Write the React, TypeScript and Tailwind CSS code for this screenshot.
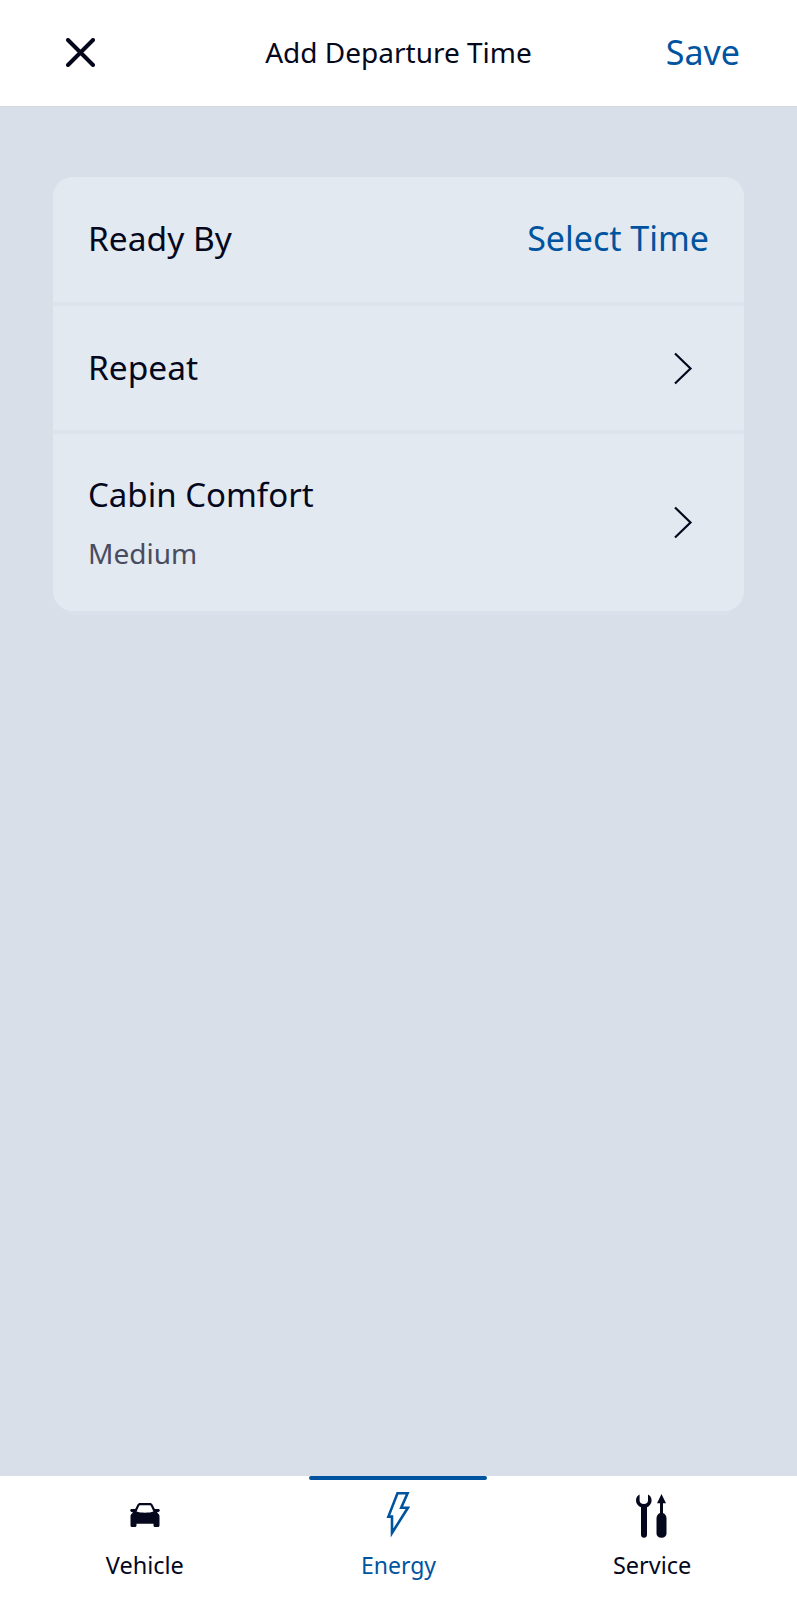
const font = { fontFamily: '"Noto Sans", sans-serif' };

function Chevron() {
  return (
    <svg width="20" height="33" viewBox="0 0 20 33" fill="none" className="shrink-0">
      <path d="M2 1.5 L17.5 16.5 L2 31.5" stroke="#05081c" strokeWidth="2.2" />
    </svg>
  );
}

function Car() {
  return (
    <svg width="30" height="24" viewBox="0 0 30 24">
      <path fill="#05081c" fillRule="evenodd" d="M7.5 1.5 C8 0.6 9 0 10 0 H20 C21 0 22 0.6 22.5 1.5 L24.8 6 H28 C29.2 6 30 6.8 29.8 7.4 C29.6 8.2 28.4 9.2 26.8 9.6 L28.6 11 C29.2 11.6 29.5 12.4 29.5 13.2 V22.5 C29.5 23.4 28.9 24 28 24 H25 C24.1 24 23.5 23.4 23.5 22.5 V20.8 H6.5 V22.5 C6.5 23.4 5.9 24 5 24 H2 C1.1 24 0.5 23.4 0.5 22.5 V13.2 C0.5 12.4 0.8 11.6 1.4 11 L3.2 9.6 C1.6 9.2 0.4 8.2 0.2 7.4 C0 6.8 0.8 6 2 6 H5.2 Z M10 2.2 C9.6 2.2 9.4 2.4 9.2 2.8 L6.6 8.6 C8.6 9.4 11.6 9.8 15 9.8 C18.4 9.8 21.4 9.4 23.4 8.6 L20.8 2.8 C20.6 2.4 20.4 2.2 20 2.2 Z" />
    </svg>
  );
}

function Bolt() {
  return (
    <svg width="24" height="48" viewBox="0 0 24 48" fill="none">
      <path d="M11.5 1.3 H21.6 L15.2 15.8 H21.9 L6 41 V24.6 H2.4 Z" stroke="#00549f" strokeWidth="2.6" strokeMiterlimit="10" />
    </svg>
  );
}

function Tools() {
  return (
    <svg width="32" height="44" viewBox="0 0 32 44">
      <path fill="#05081c" d="M3.6 0.6 V6.4 C3.6 8.4 5.2 10 7.8 10 C10.4 10 12 8.4 12 6.4 V0.6 C14.2 1.6 15.6 3.9 15.6 6.6 C15.6 9.7 13.6 12.2 11 13.3 V40.8 C11 42.5 9.7 43.8 8 43.8 C6.3 43.8 5 42.5 5 40.8 V13.3 C2 12.2 0 9.7 0 6.6 C0 3.9 1.4 1.6 3.6 0.6 Z" />
      <path fill="#05081c" d="M25.5 0 L30 9.2 H27 V19 C29 19.7 30.5 21.6 30.5 24.2 V39.5 C30.5 42 28.6 43.8 25.5 43.8 C22.4 43.8 20.5 42 20.5 39.5 V24.2 C20.5 21.6 22 19.7 24 19 V9.2 H21 Z" />
    </svg>
  );
}

function Tab({ label, icon, iconPad, active }: { label: string; icon: React.ReactNode; iconPad: string; active?: boolean }) {
  return (
    <div className="relative flex flex-col items-center">
      {active && <div className="absolute top-0 left-1/2 h-[4px] w-[178px] -translate-x-1/2 rounded-full bg-[#00549f]" />}
      <div className={`flex h-[64px] w-full items-end justify-center ${iconPad}`}>{icon}</div>
      <div className={`mt-[11px] leading-[28px] ${active ? "text-[23px] text-[#00549f]" : "text-[23.5px] text-[#05081c]"}`}>{label}</div>
    </div>
  );
}

export default function App() {
  return (
    <div className="flex h-[1600px] w-full flex-col bg-[#d8dfe9]" style={font}>
      <header className="grid h-[107px] grid-cols-[1fr_auto_1fr] items-center border-b border-[#d3d7dd] bg-white px-[57px] pb-[2px]">
        <svg width="29" height="29" viewBox="0 0 29 29" fill="none" className="ml-[9px] shrink-0">
          <path d="M2 2 L27 27 M27 2 L2 27" stroke="#05081c" strokeWidth="4" strokeLinecap="round" />
        </svg>
        <div className="text-[28px] leading-[36px] text-[#05081c]">Add Departure Time</div>
        <div className="text-right text-[34px] leading-[40px] text-[#00549f]">Save</div>
      </header>

      <main className="flex-1 px-[53px] pt-[70px]">
        <div className="flex flex-col gap-[4px] overflow-hidden rounded-[20px] bg-[#dce3ed] shadow-[0_14px_0_-10px_#dae1eb]">
          <div className="flex h-[125px] items-center justify-between bg-[#e2e9f1] pr-[35px] pb-[3px] pl-[35px] leading-[44px]">
            <span className="text-[33.5px] text-[#05081c]">Ready By</span>
            <span className="text-[34px] text-[#00549f]">Select Time</span>
          </div>
          <div className="flex h-[124px] items-center justify-between bg-[#e2e9f1] pr-[51px] pl-[35px]">
            <span className="pb-[2px] text-[33.5px] text-[#05081c]">Repeat</span>
            <Chevron />
          </div>
          <div className="flex h-[177px] items-center justify-between bg-[#e2e9f1] pr-[51px] pl-[35px]">
            <div className="flex flex-col">
              <span className="text-[33px] leading-[40px] text-[#05081c]">Cabin Comfort</span>
              <span className="mt-[20px] text-[28px] leading-[36px] text-[#484c5e]">Medium</span>
            </div>
            <Chevron />
          </div>
        </div>
      </main>

      <nav className="grid h-[124px] grid-cols-3 bg-white px-[18px]">
        <Tab label="Vehicle" icon={<Car />} iconPad="pb-[13px]" />
        <Tab label="Energy" icon={<Bolt />} iconPad="pb-0" active />
        <Tab label="Service" icon={<Tools />} iconPad="pb-[2px]" />
      </nav>
    </div>
  );
}
